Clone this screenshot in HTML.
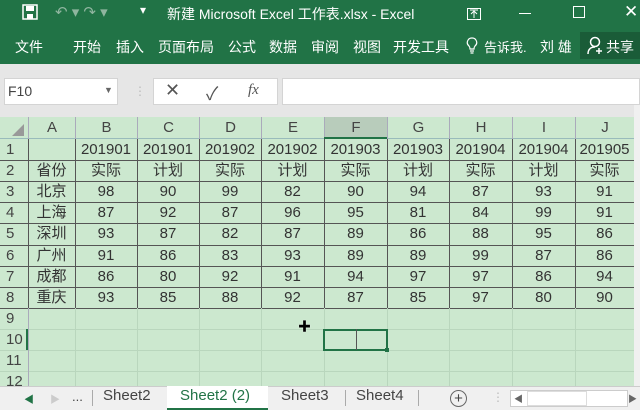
<!DOCTYPE html>
<html><head><meta charset="utf-8"><style>
*{margin:0;padding:0;box-sizing:border-box}
body{width:640px;height:410px;overflow:hidden;position:relative;background:#e6e6e6;font-family:"Liberation Sans","Noto Sans CJK SC",sans-serif}
.a{position:absolute}
.t{color:#fff;font-size:14px;white-space:nowrap}
.cell{position:absolute;text-align:center;font-size:15px;color:#333;line-height:21px;overflow:hidden;white-space:nowrap}
</style></head><body>
<div class="a" style="left:0;top:0;width:640px;height:64px;background:#217346"></div>
<svg class="a" style="left:22px;top:4px" width="16" height="16"><rect x="1" y="1" width="14" height="14" fill="none" stroke="#fff" stroke-width="1.5"/><rect x="4" y="2" width="8" height="5" fill="#fff"/><rect x="5" y="10" width="6" height="5" fill="#fff"/></svg>
<div class="a t" style="left:55px;top:3px;color:#8fb59f;font-size:15px">↶ ▾ ↷ ▾</div>
<div class="a t" style="left:140px;top:3px;font-size:12px">▾</div>
<div class="a t" style="left:167px;top:4px;font-size:14px">新建 Microsoft Excel 工作表.xlsx - Excel</div>
<svg class="a" style="left:467px;top:8px" width="14" height="12"><rect x=".5" y=".5" width="13" height="11" fill="none" stroke="#fff"/><path d="M7 3v7M4 6l3-3 3 3M3 2h8" stroke="#fff" fill="none"/></svg>
<div class="a" style="left:519px;top:13px;width:12px;height:1px;background:#fff"></div>
<div class="a" style="left:573px;top:6px;width:12px;height:12px;border:1px solid #fff"></div>
<div class="a t" style="left:624px;top:2px;font-size:17px">✕</div>
<div class="a t" style="left:15px;top:37px">文件</div>
<div class="a t" style="left:73px;top:37px">开始</div>
<div class="a t" style="left:116px;top:37px">插入</div>
<div class="a t" style="left:158px;top:37px">页面布局</div>
<div class="a t" style="left:228px;top:37px">公式</div>
<div class="a t" style="left:269px;top:37px">数据</div>
<div class="a t" style="left:311px;top:37px">审阅</div>
<div class="a t" style="left:353px;top:37px">视图</div>
<div class="a t" style="left:393px;top:37px">开发工具</div>
<svg class="a" style="left:466px;top:37px" width="12" height="18"><path d="M6 1a4.5 4.5 0 0 0-3 8c1 1 1 2 1 3h4c0-1 0-2 1-3a4.5 4.5 0 0 0-3-8zM4 14h4M4.5 16h3" stroke="#fff" fill="none" stroke-width="1.2"/></svg>
<div class="a t" style="left:484px;top:37px;font-size:13px">告诉我.</div>
<div class="a t" style="left:540px;top:37px">刘 雄</div>
<div class="a" style="left:580px;top:32px;width:60px;height:27px;background:#1a5c38"></div>
<svg class="a" style="left:587px;top:36px" width="18" height="20"><circle cx="8" cy="6" r="4.5" fill="none" stroke="#fff" stroke-width="1.5"/><path d="M1 18c0-5 3-7 7-7M12 12v6M9 15h6" stroke="#fff" fill="none" stroke-width="1.5"/></svg>
<div class="a t" style="left:606px;top:37px">共享</div>
<div class="a" style="left:4px;top:78px;width:114px;height:27px;background:#fff;border:1px solid #d4d4d4"></div>
<div class="a" style="left:8px;top:83px;font-size:14px;color:#444">F10</div>
<div class="a" style="left:104px;top:85px;font-size:9px;color:#666">▼</div>
<div class="a" style="left:134px;top:84px;font-size:12px;color:#bbb">⋮</div>
<div class="a" style="left:153px;top:78px;width:125px;height:27px;background:#fff;border:1px solid #d4d4d4"></div>
<div class="a" style="left:165px;top:80px;font-size:18px;color:#555">✕</div>
<div class="a" style="left:206px;top:80px;font-size:18px;color:#555">✓</div>
<div class="a" style="left:248px;top:82px;font-size:15px;color:#555;font-style:italic;font-family:'Liberation Serif',serif">fx</div>
<div class="a" style="left:282px;top:78px;width:358px;height:27px;background:#fff;border:1px solid #d4d4d4"></div>
<div id="g"></div>
<div class="a" style="left:0;top:386px;width:640px;height:24px;background:#f0f0f0;border-top:1px solid #ccc"></div>
<div class="a" style="left:24px;top:391px;font-size:10px;color:#217346">◀</div>
<div class="a" style="left:50px;top:391px;font-size:10px;color:#ccc">▶</div>
<div class="a" style="left:72px;top:389px;font-size:13px;color:#444">...</div>
<div class="a" style="left:92px;top:390px;width:1px;height:16px;background:#aaa"></div>
<div class="a" style="left:103px;top:387px;font-size:15px;color:#444">Sheet2</div>
<div class="a" style="left:167px;top:386px;width:101px;height:24px;background:#fff;border-bottom:2px solid #217346"></div>
<div class="a" style="left:180px;top:387px;font-size:15px;color:#217346">Sheet2 (2)</div>
<div class="a" style="left:281px;top:387px;font-size:15px;color:#444">Sheet3</div>
<div class="a" style="left:345px;top:390px;width:1px;height:16px;background:#aaa"></div>
<div class="a" style="left:356px;top:387px;font-size:15px;color:#444">Sheet4</div>
<div class="a" style="left:418px;top:390px;width:1px;height:16px;background:#aaa"></div>
<div class="a" style="left:450px;top:390px;width:17px;height:17px;border:1px solid #666;border-radius:50%;text-align:center;font-size:15px;line-height:15px;color:#444">+</div>
<div class="a" style="left:492px;top:390px;font-size:12px;color:#bbb">⋮</div>
<div class="a" style="left:510px;top:390px;width:118px;height:17px;background:#fff;border:1px solid #ccc"></div>
<div class="a" style="left:527px;top:391px;width:60px;height:15px;background:#fff;border:1px solid #ddd"></div>
<div class="a" style="left:514px;top:392px;font-size:9px;color:#666">◀</div>
<div class="a" style="left:628px;top:392px;font-size:9px;color:#666">▶</div>
<script>
var g=document.getElementById('g');
var cx=[28,75,137,199,261,324,387,449,512,575,637];
var letters='ABCDEFGHIJ';
var h='';
var top0=139,rh=21.1;
h+='<div class="a" style="left:0;top:117px;width:634px;height:269px;background:#cce8cf"></div>';
h+='<div class="a" style="left:634px;top:105px;width:6px;height:281px;background:#f0f0f0"></div>';
h+='<div class="a" style="left:0;top:117px;width:634px;height:22px;background:#cce8cf;border-bottom:1px solid #9bb"></div>';
h+='<div class="a" style="left:12px;top:124px;width:0;height:0;border-left:12px solid transparent;border-bottom:12px solid #999"></div>';
for(var i=0;i<10;i++){
 var bg=i==5?'#b8ccbb':'transparent';
 var w=Math.min(cx[i+1],634)-cx[i];
 h+='<div class="cell" style="left:'+cx[i]+'px;top:117px;width:'+w+'px;height:22px;background:'+bg+';border-left:1px solid #aab;color:#444">'+letters[i]+'</div>';
}
h+='<div class="a" style="left:324px;top:137px;width:63px;height:2px;background:#217346"></div>';
for(var r=0;r<12;r++){
 var y=top0+r*rh;
 h+='<div class="cell" style="left:0;top:'+y+'px;width:28px;height:'+rh+'px;text-align:left;padding-left:6px;color:#444;'+(r==9?'border-right:2px solid #217346;':'')+'">'+(r+1)+'</div>';
 h+='<div class="a" style="left:0;top:'+(y+rh)+'px;width:634px;height:1px;background:'+(r<8?'#555':'#b9d6bd')+'"></div>';
}
for(var i=0;i<10;i++){h+='<div class="a" style="left:'+cx[i]+'px;top:139px;width:1px;height:247px;background:'+(i==0?'#aab':'#b9d6bd')+'"></div>';}
for(var i=0;i<10;i++){h+='<div class="a" style="left:'+cx[i]+'px;top:139px;width:1px;height:'+(rh*8)+'px;background:#555"></div>';}
var data=[
['','201901','201901','201902','201902','201903','201903','201904','201904','201905'],
['省份','实际','计划','实际','计划','实际','计划','实际','计划','实际'],
['北京',98,90,99,82,90,94,87,93,91],
['上海',87,92,87,96,95,81,84,99,91],
['深圳',93,87,82,87,89,86,88,95,86],
['广州',91,86,83,93,89,89,99,87,86],
['成都',86,80,92,91,94,97,97,86,94],
['重庆',93,85,88,92,87,85,97,80,90]];
for(var r=0;r<8;r++)for(var c=0;c<10;c++){
 var w=Math.min(cx[c+1],634)-cx[c];
 h+='<div class="cell" style="left:'+cx[c]+'px;top:'+(top0+r*rh)+'px;width:'+(cx[c+1]-cx[c])+'px;max-width:'+(w)+'px;height:'+rh+'px">'+data[r][c]+'</div>';
}
var sy=top0+9*rh;
h+='<div class="a" style="left:323px;top:'+sy+'px;width:65px;height:'+(rh+1)+'px;border:2px solid #217346"></div>';
h+='<div class="a" style="left:356px;top:'+sy+'px;width:1px;height:'+rh+'px;background:#555"></div>';
h+='<div class="a" style="left:385px;top:'+(sy+rh-2)+'px;width:4px;height:4px;background:#217346"></div>';
h+='<div class="a" style="left:298px;top:316px;font-size:13px;color:#000;text-shadow:0 0 1px #fff">✚</div>';
g.innerHTML=h;
</script>
</body></html>
